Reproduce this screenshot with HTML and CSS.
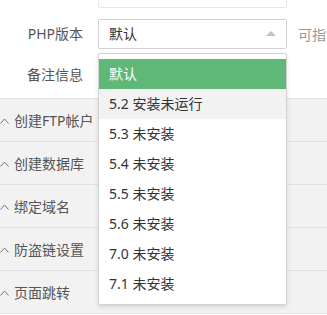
FILE: index.html
```html
<!DOCTYPE html>
<html lang="zh-CN">

<head>
    <meta charset="UTF-8">
    <meta name="viewport" content="width=device-width, initial-scale=1.0">
    <title>添加站点</title>
    <link rel="stylesheet" href="styles.css">
</head>

<body>
    <div class="form">
        <div class="form-item first">
            <label class="form-label"></label>
            <div class="input-block">
                <input type="text" class="input">
            </div>
        </div>
        <div class="form-item">
            <label class="form-label">PHP版本</label>
            <div class="input-block select-open">
                <div class="select-title">
                    <span>默认</span>
                    <i class="edge"></i>
                </div>
                <dl class="select-menu">
                    <dd class="this">默认</dd>
                    <dd class="hover">5.2 安装未运行</dd>
                    <dd>5.3 未安装</dd>
                    <dd>5.4 未安装</dd>
                    <dd>5.5 未安装</dd>
                    <dd>5.6 未安装</dd>
                    <dd>7.0 未安装</dd>
                    <dd>7.1 未安装</dd>
                </dl>
            </div>
            <div class="form-aux">可指</div>
        </div>
        <div class="form-item">
            <label class="form-label">备注信息</label>
            <div class="input-block">
                <input type="text" class="input">
            </div>
        </div>
    </div>

    <div class="collapse">
        <div class="collapse-item"><svg class="caret" width="9" height="6" viewBox="0 0 9 6"><polyline points="0.5,5.5 4.5,1 8.5,5.5" /></svg>创建FTP帐户</div>
        <div class="collapse-item"><svg class="caret" width="9" height="6" viewBox="0 0 9 6"><polyline points="0.5,5.5 4.5,1 8.5,5.5" /></svg>创建数据库</div>
        <div class="collapse-item"><svg class="caret" width="9" height="6" viewBox="0 0 9 6"><polyline points="0.5,5.5 4.5,1 8.5,5.5" /></svg>绑定域名</div>
        <div class="collapse-item"><svg class="caret" width="9" height="6" viewBox="0 0 9 6"><polyline points="0.5,5.5 4.5,1 8.5,5.5" /></svg>防盗链设置</div>
        <div class="collapse-item"><svg class="caret" width="9" height="6" viewBox="0 0 9 6"><polyline points="0.5,5.5 4.5,1 8.5,5.5" /></svg>页面跳转</div>
    </div>
</body>
</html>
```

FILE: styles.css
```css
body {
    font-family: "Noto Sans", "Noto Sans CJK SC", sans-serif;
    font-size: 14px;
    color: #555;
    background-color: #fff;
    margin: 0;
    padding: 0;
    overflow: hidden;
}

.form {
    padding-bottom: 8px;
}

.form-item {
    display: flex;
    align-items: center;
    height: 30px;
    margin-bottom: 11px;
    white-space: nowrap;
}

.form-item:last-child {
    margin-bottom: 0;
}

.form-item.first {
    margin-top: -22px;
}

.form-label {
    width: 83px;
    flex: none;
    text-align: right;
    padding-right: 15px;
    line-height: 30px;
}

.input-block {
    position: relative;
    width: 189px;
    flex: none;
}

.input,
.select-title {
    display: block;
    box-sizing: border-box;
    width: 100%;
    height: 30px;
    margin: 0;
    padding: 0 10px;
    border: 1px solid #e6e6e6;
    border-radius: 2px;
    background-color: #fff;
    font: inherit;
    color: #333;
}

.select-open .select-title {
    border-color: #d2d2d2;
    line-height: 28px;
}

.edge {
    position: absolute;
    right: 11px;
    top: 12px;
    width: 0;
    height: 0;
    border-style: solid;
    border-width: 0 5px 5px 5px;
    border-color: transparent transparent #c2c2c2 transparent;
}

.select-menu {
    position: absolute;
    left: 0;
    top: 34px;
    z-index: 10;
    box-sizing: border-box;
    width: 100%;
    margin: 0;
    padding: 5px 0;
    border: 1px solid #d2d2d2;
    border-radius: 2px;
    background-color: #fff;
    box-shadow: 0 2px 4px rgba(0, 0, 0, 0.12);
}

.select-menu dd {
    margin: 0;
    padding: 0 10px;
    height: 30px;
    line-height: 30px;
    color: #333;
}

.select-menu dd.this {
    background-color: #5fb878;
    color: #fff;
}

.select-menu dd.hover {
    background-color: #f2f2f2;
}

.form-aux {
    padding-left: 11px;
    color: #999;
    overflow: hidden;
}

.collapse {
    background-color: #f2f2f2;
    border-top: 1px solid #e2e2e2;
}

.collapse-item {
    display: flex;
    align-items: center;
    height: 42px;
    border-bottom: 1px solid #e2e2e2;
    color: #555;
    white-space: nowrap;
}

.caret {
    flex: none;
    margin: 2px 5px 0 0;
    fill: none;
    stroke: #777;
    stroke-width: 1;
}
```
